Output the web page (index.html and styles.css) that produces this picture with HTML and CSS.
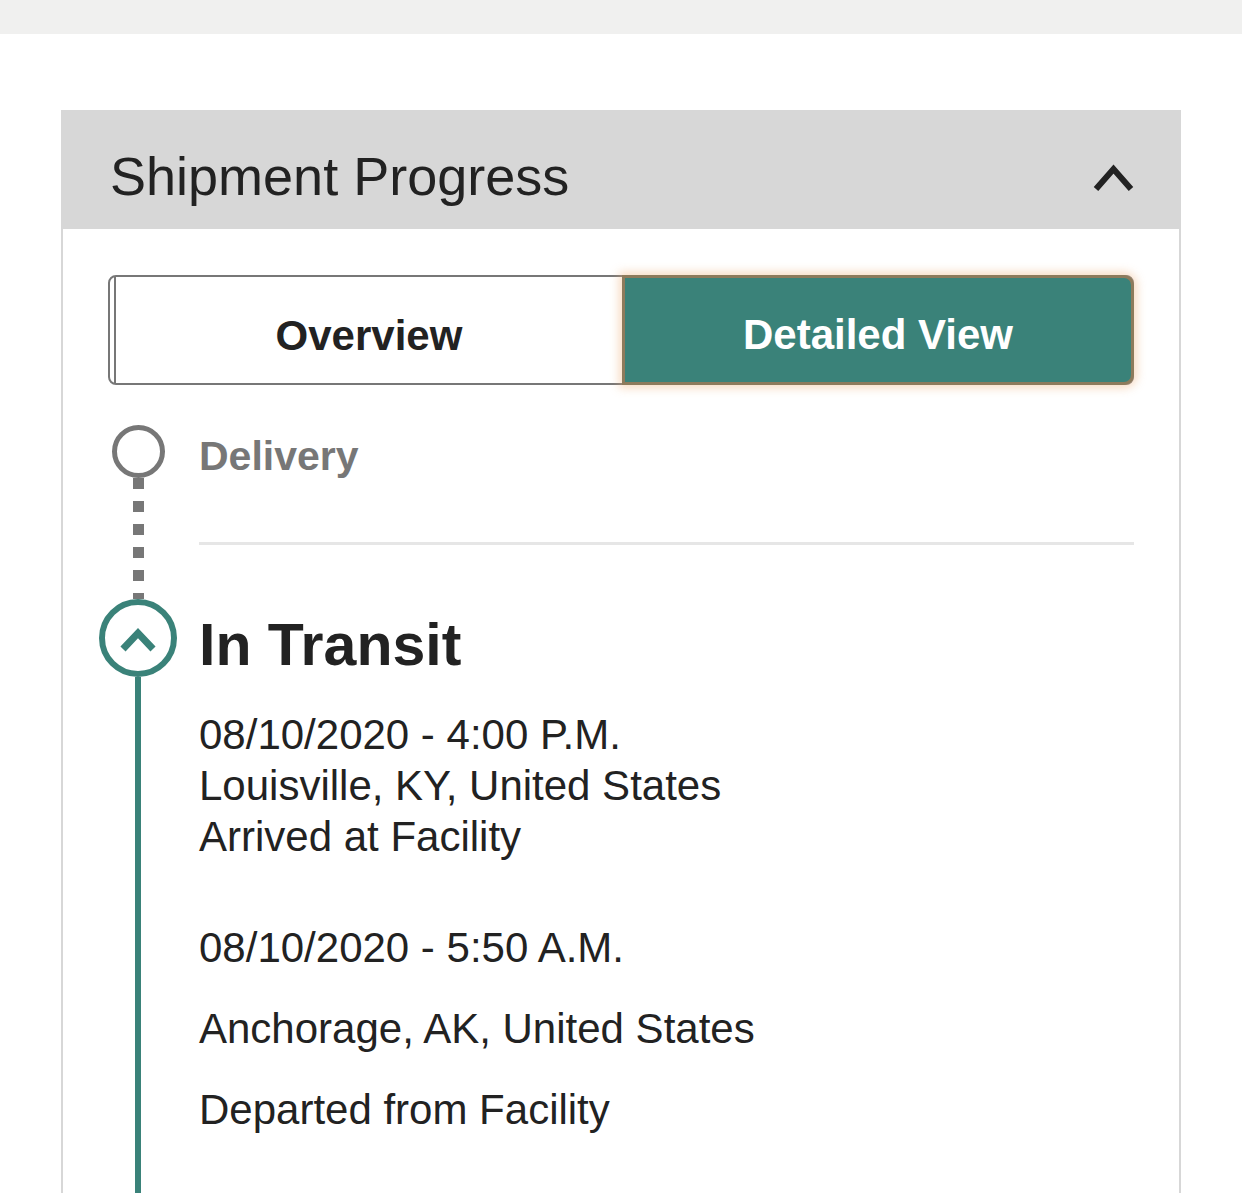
FILE: index.html
```html
<!DOCTYPE html>
<html lang="en">
<head>
<meta charset="utf-8">
<title>Shipment Progress</title>
<link rel="stylesheet" href="styles.css">
</head>
<body>
<div class="topbar"></div>
<section class="card">
  <header class="card-header">
    <h2 class="card-title">Shipment Progress</h2>
    <svg class="collapse-icon" width="44" height="30" viewBox="0 0 44 30" aria-hidden="true">
      <polyline points="5,26 22.5,6 40,26" fill="none" stroke="#222" stroke-width="6"/>
    </svg>
  </header>
  <div class="card-body">
    <div class="toggle">
      <div class="tab tab-overview">Overview</div>
      <div class="tab tab-detailed">Detailed View</div>
    </div>
    <div class="timeline">
      <div class="step step-pending">
        <div class="rail">
          <svg class="node" width="53" height="53" viewBox="0 0 53 53" aria-hidden="true">
            <circle cx="26.5" cy="26.5" r="24" fill="#fff" stroke="#777" stroke-width="5"/>
          </svg>
          <span class="line line-dashed"></span>
        </div>
        <div class="step-body">
          <h3 class="title-muted">Delivery</h3>
          <hr class="sep">
        </div>
      </div>
      <div class="step step-current">
        <div class="rail">
          <svg class="node" width="78" height="78" viewBox="0 0 78 78" aria-hidden="true">
            <circle cx="39" cy="39" r="36" fill="#fff" stroke="#3a8279" stroke-width="6"/>
            <polyline points="24,50 39,34 54,50" fill="none" stroke="#3a8279" stroke-width="7"/>
          </svg>
          <span class="line line-solid"></span>
        </div>
        <div class="step-body">
          <h3 class="title">In Transit</h3>
          <p class="event">08/10/2020 - 4:00 P.M.<br>Louisville, KY, United States<br>Arrived at Facility</p>
          <div class="event-group">
            <p class="event">08/10/2020 - 5:50 A.M.</p>
            <p class="event spaced">Anchorage, AK, United States</p>
            <p class="event spaced">Departed from Facility</p>
          </div>
        </div>
      </div>
    </div>
  </div>
</section>
</body>
</html>
```
FILE: styles.css
```css
body {
  margin: 0;
  font-family: "Liberation Sans", Arial, sans-serif;
  color: #222;
  background: #fff;
}

.topbar {
  height: 34px;
  background: #f0f0ef;
}

.card {
  margin: 76px 0 0 61px;
  width: 1120px;
  box-sizing: border-box;
  border: 2px solid #d7d7d7;
  border-bottom: none;
}

.card-header {
  background: #d7d7d7;
  height: 117px;
  box-sizing: border-box;
  padding: 33px 44px 0 47px;
  display: flex;
  justify-content: space-between;
  align-items: flex-start;
}

.card-title {
  margin: 0;
  font-size: 54px;
  font-weight: normal;
  line-height: 62px;
  color: #222;
}

.collapse-icon {
  display: block;
  margin-top: 18px;
}

.card-body {
  padding: 46px 45px 0 45px;
}

.toggle {
  display: flex;
  height: 110px;
  box-sizing: border-box;
  border: 2px solid #777;
  border-radius: 8px;
}

.tab {
  display: flex;
  align-items: center;
  justify-content: center;
  font-size: 42px;
  font-weight: bold;
  padding-top: 11px;
  box-sizing: border-box;
}

.tab-overview {
  flex: none;
  width: 508px;
  margin-left: 4px;
  border-left: 2px solid #777;
  background: #fff;
  color: #222;
}

.tab-detailed {
  flex: 1;
  margin: -2px -2px -2px 0;
  background: #3a8279;
  color: #fff;
  border: 3px solid #8d7b5c;
  border-radius: 0 10px 10px 0;
  box-shadow: 0 0 10px 3px rgba(238, 176, 120, 0.45);
  padding-top: 9px;
}

.timeline {
  margin-top: 40px;
}

.step {
  display: flex;
}

.rail {
  flex: none;
  width: 60px;
  margin-right: 31px;
  display: flex;
  flex-direction: column;
  align-items: center;
}

.node {
  display: block;
  flex: none;
}

.line {
  flex: 1;
  display: block;
}

.line-dashed {
  width: 11px;
  background: repeating-linear-gradient(to bottom, #777 0 11px, transparent 11px 23px);
}

.line-solid {
  width: 6px;
  background: #3a8279;
}

.step-body {
  flex: 1;
}

.step-pending .step-body {
  padding: 7px 0 54px;
}

.title-muted {
  margin: 0;
  font-size: 41px;
  line-height: 48px;
  font-weight: bold;
  color: #777;
}

.sep {
  margin: 62px 0 0;
  border: 0;
  height: 3px;
  background: #e6e6e6;
}

.step-current .step-body {
  padding: 12px 0 120px;
}

.title {
  margin: 0 0 30px;
  font-size: 59px;
  line-height: 68px;
  font-weight: bold;
  color: #222;
}

.event {
  margin: 0;
  font-size: 42px;
  line-height: 51px;
  color: #222;
}

.event-group {
  margin-top: 60px;
}

.event.spaced {
  margin-top: 30px;
}
```
